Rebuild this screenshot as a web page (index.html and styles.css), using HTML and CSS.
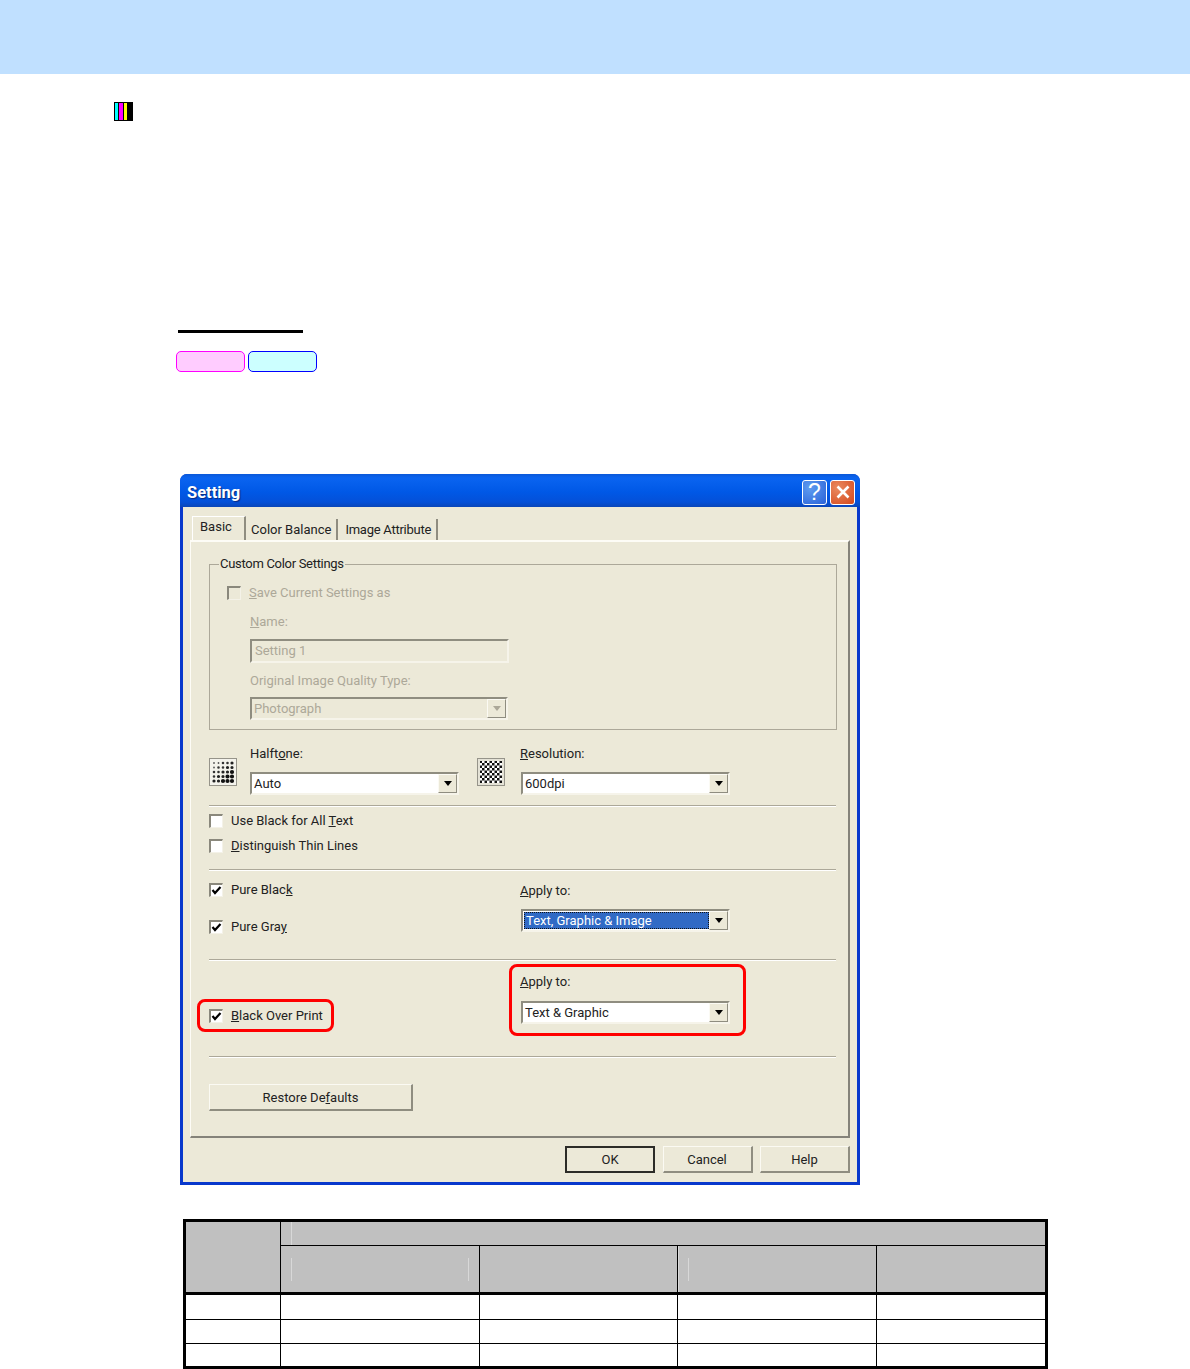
FILE: index.html
```html
<!DOCTYPE html>
<html lang="en">
<head>
    <meta charset="UTF-8">
    <meta name="viewport" content="width=device-width, initial-scale=1.0">
    <title>Setting</title>
    <link rel="stylesheet" href="styles.css">
</head>
<body>
    <div class="top-band"></div>

    <div class="color-mark">
        <span class="bar-cyan"></span>
        <span class="bar-magenta"></span>
        <span class="bar-yellow"></span>
    </div>

    <div class="heading-block">
        <div class="heading-rule"></div>
        <div class="pills">
            <span class="pill pill-pink"></span>
            <span class="pill pill-blue"></span>
        </div>
    </div>

    <div class="dialog">
        <div class="title-bar">
            <span class="title-text">Setting</span>
            <span class="title-btn btn-help">?</span>
            <span class="title-btn btn-close">
                <svg width="18" height="18" viewBox="0 0 18 18"><path d="M3.500 3.500l11 11M14.500 3.500l-11 11" stroke="#fff" stroke-width="2.600"/></svg>
            </span>
        </div>

        <div class="dialog-body">
            <div class="tabs">
                <span class="tab tab-active">Basic</span>
                <span class="tab">Color Balance</span>
                <span class="tab tab-image">Image Attribute</span>
            </div>

            <div class="panel">
                <fieldset class="group">
                    <legend>Custom Color Settings</legend>
                    <div class="check check-disabled save-check">
                        <span class="box"></span>
                        <span><u>S</u>ave Current Settings as</span>
                    </div>
                    <div class="field-label disabled name-label"><u>N</u>ame:</div>
                    <div class="text-input">Setting 1</div>
                    <div class="field-label disabled quality-label">Original Image Quality Type:</div>
                    <div class="select select-disabled quality-select">
                        <span class="select-value">Photograph</span>
                        <span class="arrow"></span>
                    </div>
                </fieldset>

                <div class="quality-row">
                    <svg class="pic-icon" width="28" height="28" viewBox="0 0 28 28">
                        <rect x="0.5" y="0.5" width="27" height="27" fill="#f4f3ec" stroke="#96948a"/>
                        <g fill="none" stroke-linecap="round">
                            <path d="M5 5h0M9.500 5h0M5 9.500h0" stroke="#555" stroke-width="1.800"/>
                            <path d="M14 5h0M18.500 5h0M9.500 9.500h0M14 9.500h0M5 14h0M9.500 14h0M5 18.500h0" stroke="#333" stroke-width="2.600"/>
                            <path d="M23 5h0M18.500 9.500h0M23 9.500h0M14 14h0M18.500 14h0M9.500 18.500h0M14 18.500h0M5 23h0M9.500 23h0" stroke="#222" stroke-width="3.200"/>
                            <path d="M23 14h0M18.500 18.500h0M23 18.500h0M14 23h0M18.500 23h0M23 23h0" stroke="#111" stroke-width="4.200"/>
                        </g>
                    </svg>
                    <div class="field halftone-field">
                        <div class="field-label">Halft<u>o</u>ne:</div>
                        <div class="select">
                            <span class="select-value">Auto</span>
                            <span class="arrow"></span>
                        </div>
                    </div>
                    <svg class="pic-icon res-icon" width="28" height="28" viewBox="0 0 28 28">
                        <defs>
                            <pattern id="checker" width="5" height="5" patternUnits="userSpaceOnUse">
                                <rect width="5" height="5" fill="#fff"/>
                                <rect width="2.500" height="2.500" fill="#111"/>
                                <rect x="2.500" y="2.500" width="2.500" height="2.500" fill="#111"/>
                            </pattern>
                        </defs>
                        <rect x="0.5" y="0.5" width="27" height="27" fill="#e4e2d6" stroke="#96948a"/>
                        <rect x="3" y="3" width="22" height="22" fill="url(#checker)"/>
                    </svg>
                    <div class="field res-field">
                        <div class="field-label"><u>R</u>esolution:</div>
                        <div class="select">
                            <span class="select-value">600dpi</span>
                            <span class="arrow"></span>
                        </div>
                    </div>
                </div>

                <div class="sep"></div>

                <div class="text-checks">
                    <div class="check">
                        <span class="box"></span>
                        <span>Use Black for All <u>T</u>ext</span>
                    </div>
                    <div class="check">
                        <span class="box"></span>
                        <span><u>D</u>istinguish Thin Lines</span>
                    </div>
                </div>

                <div class="sep"></div>

                <div class="pure-row">
                    <div class="pure-checks">
                        <div class="check">
                            <span class="box box-on"><svg width="11" height="11" viewBox="0 0 11 11"><path d="M1.500 5l2.500 3 5.500-6" fill="none" stroke="#000" stroke-width="2.200"/></svg></span>
                            <span>Pure Blac<u>k</u></span>
                        </div>
                        <div class="check">
                            <span class="box box-on"><svg width="11" height="11" viewBox="0 0 11 11"><path d="M1.500 5l2.500 3 5.500-6" fill="none" stroke="#000" stroke-width="2.200"/></svg></span>
                            <span>Pure Gra<u>y</u></span>
                        </div>
                    </div>
                    <div class="field res-field pure-field">
                        <div class="field-label"><u>A</u>pply to:</div>
                        <div class="select select-focus">
                            <span class="select-value">Text, Graphic &amp; Image</span>
                            <span class="arrow"></span>
                        </div>
                    </div>
                </div>

                <div class="sep"></div>

                <div class="over-row">
                    <div class="pure-checks">
                        <div class="check over-check">
                            <span class="box box-on"><svg width="11" height="11" viewBox="0 0 11 11"><path d="M1.500 5l2.500 3 5.500-6" fill="none" stroke="#000" stroke-width="2.200"/></svg></span>
                            <span><u>B</u>lack Over Print</span>
                        </div>
                    </div>
                    <div class="field res-field over-field">
                        <div class="field-label"><u>A</u>pply to:</div>
                        <div class="select">
                            <span class="select-value">Text &amp; Graphic</span>
                            <span class="arrow"></span>
                        </div>
                    </div>
                    <div class="callout callout-left"></div>
                    <div class="callout callout-right"></div>
                </div>

                <div class="sep"></div>

                <button class="push-btn restore-btn">Restore De<u>f</u>aults</button>
            </div>

            <div class="dialog-buttons">
                <button class="push-btn btn-default">OK</button>
                <button class="push-btn">Cancel</button>
                <button class="push-btn">Help</button>
            </div>
        </div>
    </div>

    <table class="data-table">
        <colgroup>
            <col class="col-first">
            <col class="col-mid">
            <col class="col-mid">
            <col class="col-mid">
            <col>
        </colgroup>
        <thead>
            <tr class="head-top">
                <th rowspan="2"></th>
                <th colspan="4"><span class="tick tick-top"></span></th>
            </tr>
            <tr class="head-sub">
                <th><span class="tick tick-pair"></span></th>
                <th></th>
                <th class="lit-edge"><span class="tick"></span></th>
                <th></th>
            </tr>
        </thead>
        <tbody>
            <tr class="row-a"><td></td><td></td><td></td><td></td><td></td></tr>
            <tr class="row-b"><td></td><td></td><td></td><td></td><td></td></tr>
            <tr class="row-c"><td></td><td></td><td></td><td></td><td></td></tr>
        </tbody>
    </table>
</body>
</html>
```

FILE: styles.css
```css
* {
    box-sizing: border-box;
}

body {
    margin: 0;
    background: #fff;
    font-family: Roboto, 'Liberation Sans', sans-serif;
    font-size: 13px;
    color: #222;
}

.top-band {
    height: 74px;
    background: #c0e0ff;
}

.color-mark {
    display: flex;
    width: 19px;
    height: 19px;
    margin: 28px 0 0 114px;
    padding: 1px 6px 1px 1px;
    background: #000;
    gap: 1px;
}

.color-mark span {
    flex: 1;
}

.bar-cyan { background: #00ffff; }
.bar-magenta { background: #ff00ff; }
.bar-yellow { background: #ffff00; }

.heading-block {
    margin: 209px 0 0 176px;
}

.heading-rule {
    width: 125px;
    height: 3px;
    margin-left: 2px;
    background: #000;
}

.pills {
    display: flex;
    gap: 3px;
    margin-top: 18px;
}

.pill {
    width: 69px;
    height: 21px;
    border-radius: 5px;
    border: 1px solid;
}

.pill-pink {
    background: #ffccff;
    border-color: #ff00ff;
}

.pill-blue {
    background: #ccffff;
    border-color: #0000ff;
}

/* dialog */
.dialog {
    width: 680px;
    height: 711px;
    margin: 102px 0 0 180px;
    background: #0838cc;
    border-radius: 7px 7px 0 0;
    padding: 0 3px 3px;
    display: flex;
    flex-direction: column;
}

.title-bar {
    height: 33px;
    margin: 0 -3px;
    padding: 3px 5px 0 7px;
    display: flex;
    align-items: center;
    gap: 3px;
    border-radius: 7px 7px 0 0;
    background: linear-gradient(#0a58d8 0%, #0a64f0 12%, #0058e6 55%, #0450d8 85%, #0a46b8 100%);
}

.title-text {
    flex: 1;
    color: #fff;
    font-size: 16.5px;
    font-weight: 700;
    text-shadow: 1px 1px 1px #0a2a80;
}

.title-btn {
    width: 25px;
    height: 25px;
    border: 1px solid #fff;
    border-radius: 3px;
    display: flex;
    align-items: center;
    justify-content: center;
    color: #fff;
}

.btn-help {
    background: radial-gradient(circle at 30% 30%, #5f9cf0, #2a62d8);
    font-family: 'Liberation Sans', sans-serif;
    font-size: 23px;
    font-weight: 400;
}

.btn-close {
    background: radial-gradient(circle at 30% 30%, #ea8a60, #d4481c);
}

.dialog-body {
    flex: 1;
    background: #ece9d8;
    padding: 9px 7px 0;
    display: flex;
    flex-direction: column;
}

.tabs {
    display: flex;
    height: 24px;
    padding-left: 2px;
    align-items: flex-end;
    line-height: 22px;
}

.tab {
    padding: 0 5px;
    border-right: 2px solid #8f8d80;
    height: 21px;
}

.tab-active {
    width: 54px;
    height: 24px;
    padding-left: 7px;
    border-left: 1px solid #fff;
    border-top: 1px solid #fff;
    line-height: 20px;
}

.tab-image {
    padding-left: 7px;
    letter-spacing: -0.25px;
}

.panel {
    height: 598px;
    border: 1px solid;
    border-color: #fdfcf6 #85837a #85837a #fdfcf6;
    border-width: 2px 2px 2px 1px;
    padding: 14px 11px 0 18px;
}

.group {
    margin: 0;
    padding: 0;
    height: 174px;
    width: 628px;
    border: 1px solid #aca899;
}

.group legend {
    margin-left: 9px;
    padding: 0 1px;
    line-height: 16px;
    letter-spacing: -0.3px;
}

.disabled,
.check-disabled {
    color: #aca899;
}

.check {
    display: flex;
    align-items: center;
    gap: 8px;
    height: 15px;
}

.box {
    width: 14px;
    height: 14px;
    flex: none;
    background: #fff;
    border: 1px solid;
    border-color: #8a887c #f4f2e8 #f4f2e8 #8a887c;
    border-width: 2px 1px 1px 2px;
    display: flex;
    align-items: center;
    justify-content: center;
}

.check-disabled .box {
    background: #ece9d8;
}

.save-check {
    margin: 13px 0 0 17px;
}

.field-label {
    line-height: 16px;
}

.name-label {
    margin: 14px 0 0 40px;
}

.quality-label {
    margin: 10px 0 0 40px;
}

.text-input {
    width: 259px;
    height: 24px;
    margin: 9px 0 0 40px;
    padding-left: 3px;
    line-height: 20px;
    color: #aca899;
    border: 2px solid;
    border-color: #8f8d80 #f6f4ea #f6f4ea #8f8d80;
}

.select {
    height: 23px;
    display: flex;
    align-items: center;
    justify-content: space-between;
    background: #fff;
    border: 2px solid;
    border-color: #8f8d80 #f6f4ea #f6f4ea #8f8d80;
}

.select-value {
    flex: 1;
    padding-left: 2px;
}

.arrow {
    width: 19px;
    height: 19px;
    background: #ece9d8;
    border: 1px solid;
    border-color: #fbfaf3 #8f8d80 #8f8d80 #fbfaf3;
    display: flex;
    align-items: center;
    justify-content: center;
}

.arrow::after {
    content: "";
    border: 4px solid transparent;
    border-top: 5px solid #000;
    border-bottom: 0;
}

.select-disabled {
    width: 258px;
    margin: 8px 0 0 40px;
    background: #ece9d8;
    color: #aca899;
}

.select-disabled .arrow::after {
    border-top-color: #aca899;
}

.quality-row {
    display: flex;
    margin-top: 16px;
    height: 59px;
}

.pic-icon {
    flex: none;
    margin-top: 12px;
}

.halftone-field {
    width: 209px;
    margin-left: 13px;
}

.res-icon {
    margin-left: 18px;
}

.res-field {
    width: 209px;
}

.res-field .field-label {
    margin-left: -1px;
}

.quality-row .res-field {
    margin-left: 16px;
}

.field .select {
    margin-top: 10px;
}

.sep {
    width: 627px;
    height: 2px;
    border-top: 1px solid #aca899;
    border-bottom: 1px solid #fff;
}

.text-checks {
    display: flex;
    flex-direction: column;
    gap: 10px;
    height: 62px;
    padding-top: 6px;
}

.pure-row {
    display: flex;
    height: 88px;
    padding-top: 11px;
}

.pure-field {
    padding-top: 1px;
}

.pure-checks {
    width: 312px;
    display: flex;
    flex-direction: column;
    gap: 22px;
}

.box-on svg {
    display: block;
}

.over-row {
    position: relative;
    display: flex;
    height: 95px;
}

.over-check {
    margin-top: 47px;
}

.over-field {
    padding-top: 13px;
}

.over-field .select {
    margin-top: 11px;
}

.select-focus .select-value {
    margin: 1px 0 1px 1px;
    padding-left: 2px;
    background: #316ac5;
    color: #fff;
    outline: 1px dotted #111;
    outline-offset: -1px;
    line-height: 17px;
}

/* red annotation frames over the controls */
.callout {
    position: absolute;
    border: 3px solid #ff0000;
    border-radius: 8px;
}

.callout-left {
    left: -12px;
    top: 38px;
    width: 137px;
    height: 33px;
}

.callout-right {
    left: 300px;
    top: 3px;
    width: 237px;
    height: 72px;
}

.push-btn {
    display: block;
    width: 90px;
    height: 27px;
    padding: 0;
    background: #ece9d8;
    color: #222;
    font: inherit;
    border: 1px solid;
    border-color: #fbfaf3 #8f8d80 #8f8d80 #fbfaf3;
    border-width: 1px 2px 2px 1px;
}

.restore-btn {
    width: 204px;
    margin-top: 26px;
}

.dialog-buttons {
    display: flex;
    justify-content: flex-end;
    gap: 7.5px;
    margin-top: 8px;
}

.btn-default {
    border: 2px solid #2c2c28;
}

/* table */
.data-table {
    width: 865px;
    height: 150px;
    margin: 34px 0 0 183px;
    border-collapse: collapse;
    table-layout: fixed;
    border: 3px solid #000;
}

.data-table th,
.data-table td {
    padding: 0;
    border: 1px solid #000;
    background: #fff;
}

.data-table th {
    background: #c0c0c0;
    text-align: left;
    vertical-align: top;
}

.col-first { width: 96px; }
.col-mid { width: 198.5px; }

.head-top { height: 25px; }
.head-sub { height: 48px; }
.data-table thead { border-bottom: 3px solid #000; }
.row-a { height: 25px; }
.row-b { height: 24px; }
.row-c { height: 23px; }

.tick {
    display: block;
    height: 23px;
    margin: 12px 0 0 10px;
    border-left: 1px solid #d8d8d8;
}

.tick-top {
    margin-top: 0;
}

.tick-pair {
    margin-right: 10px;
    border-right: 1px solid #d8d8d8;
}

.lit-edge {
    box-shadow: inset 1px 0 0 #d8d8d8;
}
```
